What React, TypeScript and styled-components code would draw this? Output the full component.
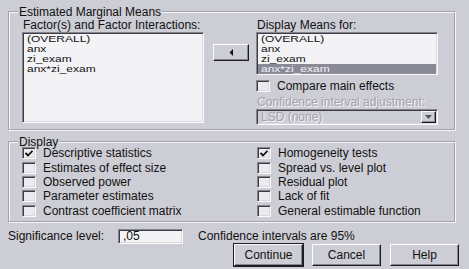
import styled, { createGlobalStyle } from "styled-components";

const GlobalStyle = createGlobalStyle`
  html, body {
    margin: 0;
    padding: 0;
    background: #cdcdd5;
  }
  body {
    font-family: "Liberation Sans", Arial, sans-serif;
    font-size: 12px;
    color: #111;
  }
`;

const Dialog = styled.div`
  width: 469px;
  height: 269px;
  box-sizing: border-box;
  padding: 6px 10px 0 8px;
  background: #cdcdd5;
  overflow: hidden;
`;

const Group = styled.fieldset<{ $gap?: number }>`
  margin: ${(p) => p.$gap ?? 0}px 0 0 0;
  padding: 0;
  width: 448px;
  box-sizing: border-box;
  border: 2px groove #f6f6fa;
  min-width: 0;
`;

const Legend = styled.legend`
  margin-left: 8px;
  padding: 0 1px;
  line-height: 12px;
  height: 12px;
`;

const EmmBody = styled.div`
  display: flex;
  padding: 1px 0 4px 12px;
`;

const Column = styled.div`
  display: flex;
  flex-direction: column;
  width: 182px;
`;

const Label = styled.div<{ $disabled?: boolean }>`
  line-height: 12px;
  height: 12px;
  padding-left: 1px;
  white-space: nowrap;
  color: ${(p) => (p.$disabled ? "#a2a2aa" : "#111")};
  text-shadow: ${(p) => (p.$disabled ? "1px 1px 0 #f4f4f8" : "none")};
`;

const ListBox = styled.div<{ $height: number }>`
  margin-top: 1px;
  height: ${(p) => p.$height}px;
  box-sizing: border-box;
  background: #f3f3f5;
  border-top: 1px solid #85858d;
  border-left: 1px solid #85858d;
  border-bottom: 1px solid #fbfbfd;
  border-right: 1px solid #fbfbfd;
  box-shadow: inset 1px 1px 0 #3c3c44, inset -1px -1px 0 #d8d8de;
  padding: 1px 1px 0 1px;
  overflow: hidden;
`;

const ListItem = styled.div<{ $selected?: boolean }>`
  height: 10px;
  display: flex;
  align-items: center;
  padding-left: 3px;
  white-space: nowrap;
  background: ${(p) => (p.$selected ? "#8a8a97" : "transparent")};
  color: ${(p) => (p.$selected ? "#f2f2f6" : "#111")};
`;

/* the list rows are squeezed vertically in the original, so squeeze the glyphs the same way */
const ItemText = styled.span`
  display: inline-block;
  line-height: 12px;
  transform: scaleY(0.72);
`;

const MoveColumn = styled.div`
  width: 36px;
  margin: 25px 7px 0 9px;
`;

const RaisedButton = styled.button<{ $default?: boolean }>`
  display: flex;
  align-items: center;
  justify-content: center;
  padding: 0;
  box-sizing: border-box;
  font: inherit;
  color: #111;
  background: #cdcdd5;
  border-top: 1px solid #fbfbfd;
  border-left: 1px solid #fbfbfd;
  border-bottom: 1px solid #1c1c22;
  border-right: 1px solid #1c1c22;
  box-shadow: inset -1px -1px 0 #85858d
    ${(p) => (p.$default ? ", 0 0 0 1px #1c1c22" : "")};
`;

const ArrowButton = styled(RaisedButton)`
  width: 36px;
  height: 17px;
`;

const CheckRow = styled.label<{ $top?: number }>`
  display: flex;
  align-items: center;
  height: 14.3px;
  margin-top: ${(p) => p.$top ?? 0}px;
  white-space: nowrap;
`;

const Box = styled.span`
  display: inline-flex;
  align-items: center;
  justify-content: center;
  width: 14px;
  height: 12px;
  box-sizing: border-box;
  margin-right: 7px;
  background: #ebebef;
  border-top: 1px solid #85858d;
  border-left: 1px solid #85858d;
  border-bottom: 1px solid #fbfbfd;
  border-right: 1px solid #fbfbfd;
  box-shadow: inset 1px 1px 0 #3c3c44, inset -1px -1px 0 #d8d8de;
`;

const Select = styled.div`
  margin-top: 1px;
  height: 16px;
  box-sizing: border-box;
  display: flex;
  align-items: center;
  background: #cdcdd5;
  border-top: 1px solid #85858d;
  border-left: 1px solid #85858d;
  border-bottom: 1px solid #fbfbfd;
  border-right: 1px solid #fbfbfd;
  box-shadow: inset 1px 1px 0 #3c3c44, inset -1px -1px 0 #d8d8de;
  padding: 0 1px 0 4px;
  color: #a2a2aa;
  text-shadow: 1px 1px 0 #f4f4f8;
`;

const SelectText = styled.span`
  flex: 1;
`;

const SelectButton = styled(RaisedButton)`
  width: 15px;
  height: 12px;
`;

const DisplayBody = styled.div`
  display: flex;
  margin-top: -2px;
  padding: 0 0 3px 12px;
`;

const CheckColumn = styled.div<{ $width?: number }>`
  display: flex;
  flex-direction: column;
  width: ${(p) => (p.$width ? `${p.$width}px` : "auto")};
`;

const SigRow = styled.div`
  display: flex;
  align-items: center;
  height: 15px;
  margin-top: 6px;
  white-space: nowrap;
`;

const SigLabel = styled.span`
  width: 110px;
`;

const TextInput = styled.div`
  width: 65px;
  height: 15px;
  box-sizing: border-box;
  background: #f3f3f5;
  border-top: 1px solid #85858d;
  border-left: 1px solid #85858d;
  border-bottom: 1px solid #fbfbfd;
  border-right: 1px solid #fbfbfd;
  box-shadow: inset 1px 1px 0 #3c3c44, inset -1px -1px 0 #d8d8de;
  padding-left: 4px;
  line-height: 13px;
`;

const Note = styled.span`
  margin-left: 15px;
`;

const ButtonRow = styled.div`
  display: flex;
  justify-content: flex-end;
  gap: 9px;
`;

const DialogButton = styled(RaisedButton)`
  width: 69px;
  height: 22px;
`;

const Check = ({ checked }: { checked?: boolean }) => (
  <Box>
    {checked && (
      <svg width="8" height="7" viewBox="0 0 8 7">
        <path d="M0.5 3 L3 5.5 L7.5 0.8" stroke="#111" strokeWidth="1.8" fill="none" />
      </svg>
    )}
  </Box>
);

const factors = ["(OVERALL)", "anx", "zi_exam", "anx*zi_exam"];

const leftChecks = [
  { label: "Descriptive statistics", checked: true },
  { label: "Estimates of effect size" },
  { label: "Observed power" },
  { label: "Parameter estimates" },
  { label: "Contrast coefficient matrix" },
];

const rightChecks = [
  { label: "Homogeneity tests", checked: true },
  { label: "Spread vs. level plot" },
  { label: "Residual plot" },
  { label: "Lack of fit" },
  { label: "General estimable function" },
];

const App = () => {
  return (
    <>
      <GlobalStyle />
      <Dialog>
        <Group>
          <Legend>Estimated Marginal Means</Legend>
          <EmmBody>
            <Column>
              <Label>Factor(s) and Factor Interactions:</Label>
              <ListBox $height={91}>
                {factors.map((f) => (
                  <ListItem key={f}>
                    <ItemText>{f}</ItemText>
                  </ListItem>
                ))}
              </ListBox>
            </Column>
            <MoveColumn>
              <ArrowButton>
                <svg width="5" height="7" viewBox="0 0 5 7">
                  <path d="M4 0 L4 7 L0.5 3.5 Z" fill="#111" />
                </svg>
              </ArrowButton>
            </MoveColumn>
            <Column>
              <Label>Display Means for:</Label>
              <ListBox $height={43}>
                {factors.map((f, i) => (
                  <ListItem key={f} $selected={i === 3}>
                    <ItemText>{f}</ItemText>
                  </ListItem>
                ))}
              </ListBox>
              <CheckRow $top={4}>
                <Check />
                Compare main effects
              </CheckRow>
              <Label $disabled style={{ marginTop: 3 }}>
                Confidence interval adjustment:
              </Label>
              <Select>
                <SelectText>LSD (none)</SelectText>
                <SelectButton>
                  <svg width="7" height="4" viewBox="0 0 7 4">
                    <path d="M0 0 L7 0 L3.5 4 Z" fill="#55555d" />
                  </svg>
                </SelectButton>
              </Select>
            </Column>
          </EmmBody>
        </Group>

        <Group $gap={5}>
          <Legend>Display</Legend>
          <DisplayBody>
            <CheckColumn $width={235}>
              {leftChecks.map((c) => (
                <CheckRow key={c.label}>
                  <Check checked={c.checked} />
                  {c.label}
                </CheckRow>
              ))}
            </CheckColumn>
            <CheckColumn>
              {rightChecks.map((c) => (
                <CheckRow key={c.label}>
                  <Check checked={c.checked} />
                  {c.label}
                </CheckRow>
              ))}
            </CheckColumn>
          </DisplayBody>
        </Group>

        <SigRow>
          <SigLabel>Significance level:</SigLabel>
          <TextInput>,05</TextInput>
          <Note>Confidence intervals are 95%</Note>
        </SigRow>

        <ButtonRow>
          <DialogButton $default>Continue</DialogButton>
          <DialogButton>Cancel</DialogButton>
          <DialogButton>Help</DialogButton>
        </ButtonRow>
      </Dialog>
    </>
  );
};

export default App;
